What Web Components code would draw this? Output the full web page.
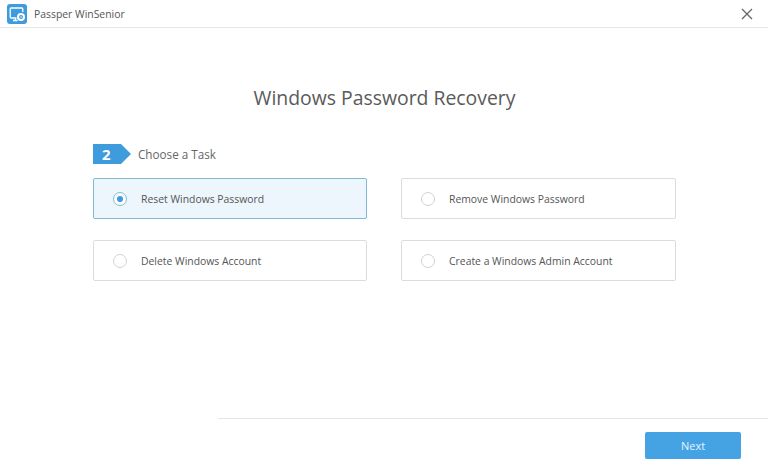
<!DOCTYPE html>
<html>
<head>
<meta charset="utf-8">
<title>Passper WinSenior</title>
<style>
    html, body { margin: 0; height: 100%; background: #fff; }
    body { font-family: "Open Sans", "Noto Sans", sans-serif; color: #555; }
</style>
</head>
<body>
<app-window></app-window>

<script>
//Barre de titre avec logo et croix
class TitleBar extends HTMLElement {
    constructor() {
        super();
        this.attachShadow({ mode: "open" });
        this.shadowRoot.innerHTML = `<style>
            :host { display: flex; align-items: center; height: 27px; border-bottom: 1px solid #e6e6e6; padding: 0 15px 0 7px; box-sizing: content-box; }
            svg.logo { width: 20px; height: 20px; margin-right: 7px; flex: none; }
            span { font-size: 10.4px; color: #555; flex: 1; }
            svg.close { width: 12px; height: 12px; flex: none; }
        </style>
        <svg class="logo" viewBox="0 0 20 20">
            <rect width="20" height="20" rx="3" fill="#3e9bdc"/>
            <path d="M9.500 14H4.200a1 1 0 0 1-1-1V5a1 1 0 0 1 1-1h10.600a1 1 0 0 1 1 1v3M6 16.500h4.500M8.500 14v2.500" fill="none" stroke="#fff" stroke-width="1.300"/>
            <circle cx="14" cy="13" r="3" fill="none" stroke="#fff" stroke-width="2"/>
            <circle cx="14" cy="13" r="0.800" fill="#fff"/>
        </svg>
        <span><slot></slot></span>
        <svg class="close" viewBox="0 0 12 12"><path d="M1 1l10 10M11 1L1 11" stroke="#666" stroke-width="1.300" fill="none"/></svg>`;
    }
}

//Etiquette de l'etape en forme de fleche
class StepLabel extends HTMLElement {
    constructor() {
        super();
        this.attachShadow({ mode: "open" });
        this.shadowRoot.innerHTML = `<style>
            :host { display: flex; align-items: center; gap: 7px; height: 20px; }
            .num {
                width: 38px; height: 20px; background: #3e9bdc; color: #fff; font-size: 15px; font-weight: 700;
                clip-path: polygon(0 0, 28px 0, 38px 50%, 28px 100%, 0 100%);
                display: flex; align-items: center; padding-left: 9px; box-sizing: border-box;
            }
            span { font-size: 11.7px; color: #666; }
        </style>
        <div class="num">${this.getAttribute("num")}</div>
        <span><slot></slot></span>`;
    }
}

//Carte avec bouton radio
class TaskOption extends HTMLElement {
    constructor() {
        super();
        this.attachShadow({ mode: "open" });
        this.shadowRoot.innerHTML = `<style>
            :host {
                display: flex; align-items: center; height: 41px; box-sizing: border-box;
                border: 1px solid #dcdcdc; border-radius: 2px; padding-left: 19px; background: #fff;
            }
            :host([checked]) { border-color: #7fb9d6; background: #edf6fc; }
            .radio { width: 12px; height: 12px; border: 1px solid #d2d2d2; border-radius: 50%; margin-right: 14px; flex: none; display: flex; align-items: center; justify-content: center; background: #fff; }
            :host([checked]) .radio { border-color: #7fb9d6; }
            :host([checked]) .radio::after { content: ""; width: 6px; height: 6px; border-radius: 50%; background: #3e9bdc; }
            span { font-size: 10.4px; color: #555; }
        </style>
        <div class="radio"></div>
        <span><slot></slot></span>`;
    }
}

class NextButton extends HTMLElement {
    constructor() {
        super();
        this.attachShadow({ mode: "open" });
        this.shadowRoot.innerHTML = `<style>
            :host { display: flex; align-items: center; justify-content: center; width: 96px; height: 27px; background: #45a2e3; border-radius: 2px; color: #e4f4ff; font-size: 11px; }
        </style>
        <slot></slot>`;
    }
}

class AppWindow extends HTMLElement {
    constructor() {
        super();
        this.attachShadow({ mode: "open" });
        this.shadowRoot.innerHTML = `<style>
            :host { display: flex; flex-direction: column; height: 473px; overflow: hidden; }
            main { flex: 1; padding: 0 92px 0 93px; display: flex; flex-direction: column; }
            h1 { margin: 53px 0 29px; font-size: 19.4px; line-height: 34px; font-weight: 400; color: #5a5a5a; text-align: center; }
            .grid { display: grid; grid-template-columns: 274px 275px; column-gap: 34px; row-gap: 21px; margin-top: 14px; }
            footer { margin-left: 218px; border-top: 1px solid #e6e6e6; height: 55px; padding: 13px 27px 0 0; display: flex; justify-content: flex-end; box-sizing: border-box; }
        </style>
        <title-bar>Passper WinSenior</title-bar>
        <main>
            <h1>Windows Password Recovery</h1>
            <step-label num="2">Choose a Task</step-label>
            <div class="grid">
                <task-option checked>Reset Windows Password</task-option>
                <task-option>Remove Windows Password</task-option>
                <task-option>Delete Windows Account</task-option>
                <task-option>Create a Windows Admin Account</task-option>
            </div>
        </main>
        <footer><next-button>Next</next-button></footer>`;
    }
}

customElements.define("title-bar", TitleBar);
customElements.define("step-label", StepLabel);
customElements.define("task-option", TaskOption);
customElements.define("next-button", NextButton);
customElements.define("app-window", AppWindow);
</script>
</body>
</html>
